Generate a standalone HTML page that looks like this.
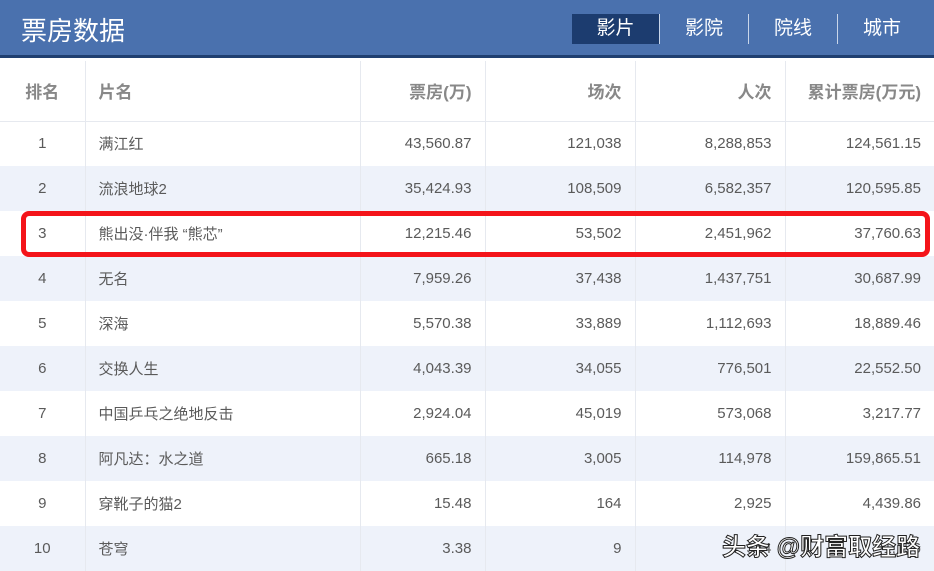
<!DOCTYPE html>
<html><head><meta charset="utf-8"><style>
*{margin:0;padding:0;box-sizing:border-box}
body{width:934px;height:570px;overflow:hidden;background:#fff;font-family:"Liberation Sans","Noto Sans CJK SC",sans-serif;position:relative}
.hd{position:absolute;left:0;top:0;width:934px;height:58px;background:#4a71ae;border-bottom:3px solid #1f3f70}
.hd .t{position:absolute;left:21px;top:11px;font-size:26px;color:#fff}
.tab{position:absolute;top:14px;height:30px;line-height:30px;font-size:19px;color:#fff;text-align:center}
.sep{position:absolute;top:14px;width:1px;height:30px;background:#c9d6ea}
table{position:absolute;left:0;top:61px;border-collapse:collapse;width:934px;table-layout:fixed}
td{height:45px;font-size:15px;color:#5a5a5a;border-left:1px solid #e6e9ef;padding:0 13px;white-space:nowrap}
td:first-child{border-left:none;text-align:center;padding:0}
tr.h td{height:60px;font-size:17px;font-weight:bold;color:#888;border-bottom:1px solid #e6e9ef}
tr:nth-child(odd):not(.h) td{background:#eef2fa}
.r{text-align:right}
.red{position:absolute;left:21px;top:211px;width:909px;height:46px;border:5px solid #f4141a;border-radius:8px}
.wm{position:absolute;left:722px;top:527px;font-size:24px;color:#fff;-webkit-text-stroke:1px #222;font-weight:bold}
</style></head><body>
<div class="hd"><div class="t">票房数据</div>
<div class="tab" style="left:572px;width:87px;background:#1c3c6f">影片</div>
<div class="sep" style="left:659px"></div>
<div class="tab" style="left:660px;width:88px">影院</div>
<div class="sep" style="left:748px"></div>
<div class="tab" style="left:749px;width:88px">院线</div>
<div class="sep" style="left:837px"></div>
<div class="tab" style="left:838px;width:88px">城市</div>
</div>
<table>
<colgroup><col style="width:85px"><col style="width:275px"><col style="width:125px"><col style="width:150px"><col style="width:150px"><col style="width:149px"></colgroup>
<tr class="h"><td>排名</td><td>片名</td><td class="r">票房(万)</td><td class="r">场次</td><td class="r">人次</td><td class="r" style="padding-right:13px">累计票房(万元)</td></tr>
<tr><td>1</td><td>满江红</td><td class="r">43,560.87</td><td class="r">121,038</td><td class="r">8,288,853</td><td class="r">124,561.15</td></tr>
<tr><td>2</td><td>流浪地球2</td><td class="r">35,424.93</td><td class="r">108,509</td><td class="r">6,582,357</td><td class="r">120,595.85</td></tr>
<tr><td>3</td><td>熊出没·伴我 “熊芯”</td><td class="r">12,215.46</td><td class="r">53,502</td><td class="r">2,451,962</td><td class="r">37,760.63</td></tr>
<tr><td>4</td><td>无名</td><td class="r">7,959.26</td><td class="r">37,438</td><td class="r">1,437,751</td><td class="r">30,687.99</td></tr>
<tr><td>5</td><td>深海</td><td class="r">5,570.38</td><td class="r">33,889</td><td class="r">1,112,693</td><td class="r">18,889.46</td></tr>
<tr><td>6</td><td>交换人生</td><td class="r">4,043.39</td><td class="r">34,055</td><td class="r">776,501</td><td class="r">22,552.50</td></tr>
<tr><td>7</td><td>中国乒乓之绝地反击</td><td class="r">2,924.04</td><td class="r">45,019</td><td class="r">573,068</td><td class="r">3,217.77</td></tr>
<tr><td>8</td><td>阿凡达：水之道</td><td class="r">665.18</td><td class="r">3,005</td><td class="r">114,978</td><td class="r">159,865.51</td></tr>
<tr><td>9</td><td>穿靴子的猫2</td><td class="r">15.48</td><td class="r">164</td><td class="r">2,925</td><td class="r">4,439.86</td></tr>
<tr><td>10</td><td>苍穹</td><td class="r">3.38</td><td class="r">9</td><td class="r">344</td><td class="r">1,156</td></tr>
</table>
<div class="red"></div>
<div class="wm">头条 @财富取经路</div>
</body></html>
